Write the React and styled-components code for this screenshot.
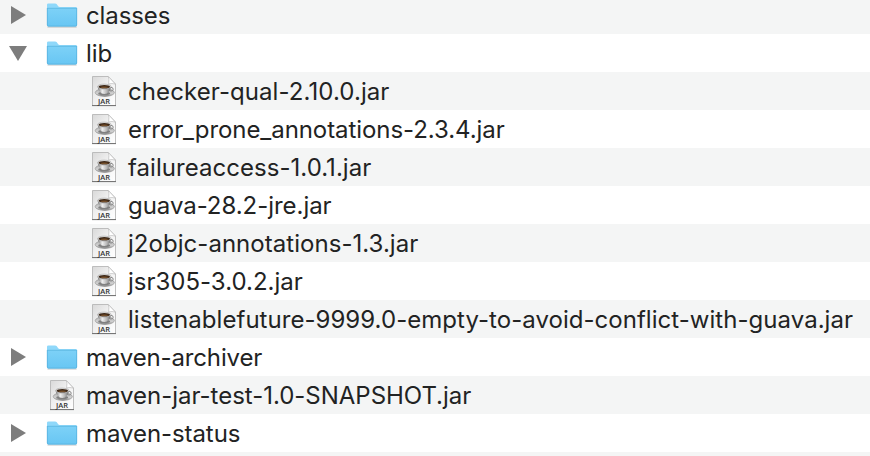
import React from "react";
import styled, { createGlobalStyle } from "styled-components";

const GlobalStyle = createGlobalStyle`
  body { margin: 0; background: #fff; overflow: hidden; }
`;

const FileList = styled.div`
  display: flex;
  flex-direction: column;
  width: 870px;
  height: 456px;
  margin: 0;
  overflow: hidden;
  background: #fff;
`;

const Row = styled.div`
  display: flex;
  flex: none;
  align-items: flex-end;
  width: 100%;
  height: ${(p) => p.$height || 38}px;
  background: ${(p) => (p.$shaded ? "#f4f5f5" : "#ffffff")};
`;

const Disclosure = styled.div`
  flex: none;
  width: ${(p) => (p.$nested ? 86 : 44)}px;
  height: 38px;
`;

const IconSlot = styled.div`
  flex: none;
  width: 42px;
  height: 38px;
`;

const Label = styled.span`
  height: 38px;
  font-family: Inter, "Liberation Sans", sans-serif;
  font-size: 24px;
  line-height: 40px;
  letter-spacing: ${(p) => p.$tracking || 0}px;
  font-feature-settings: "calt" 0;
  white-space: nowrap;
  color: #222323;
`;

const Drawing = styled.svg`
  display: block;
`;

function Arrow({ open }) {
  return (
    <Drawing width="44" height="38" viewBox="0 0 44 38">
      <path d={open ? "M9 12H27L18 27Z" : "M11 10V28L26 19Z"} fill="#7d7d7d" />
    </Drawing>
  );
}

function FolderIcon() {
  return (
    <Drawing width="42" height="38" viewBox="0 0 42 38">
      <path d="M3.5 31H32.6" stroke="#000" strokeOpacity=".2" strokeWidth="1.2" />
      <path d="M3 29V8.8Q3 7.4 4.4 7.4H11.2Q12 7.4 12.6 8.1L14.2 10.2Q14.7 11 15.8 11H31.6Q33 11 33 12.4V29Z" fill="#8fd8fa" />
      <path d="M3 12.2H33V29Q33 30.4 31.6 30.4H4.4Q3 30.4 3 29Z" fill="url(#folderFront)" />
      <path d="M3.4 12.3H32.6" stroke="#58b5df" strokeWidth=".8" />
      <path d="M3.3 12V29Q3.3 30.1 4.4 30.1H31.6Q32.7 30.1 32.7 29V12" fill="none" stroke="#51addb" strokeWidth=".7" />
    </Drawing>
  );
}

function JarIcon() {
  return (
    <Drawing width="42" height="38" viewBox="0 0 42 38">
      <path d="M6.5 4.5H22.2L29.5 12V33.5H6.5Z" fill="url(#jarPaper)" stroke="#b0b0b0" strokeWidth=".8" />
      <path d="M6 33.6H30" stroke="#6f6f6f" strokeWidth="1" />
      <path d="M22.4 4.6Q23.4 7.2 22.6 11.9Q26 11 29.3 12.1Z" fill="#fff" stroke="#b4b4b4" strokeWidth=".6" />
      <ellipse cx="18.8" cy="20.6" rx="9.6" ry="3.9" fill="url(#saucer)" stroke="#858585" strokeWidth=".5" />
      <ellipse cx="18.2" cy="21.4" rx="6" ry="1.8" fill="#808080" />
      <ellipse cx="25" cy="17.2" rx="2.2" ry="1.8" fill="none" stroke="#888" strokeWidth="1" />
      <path d="M11.6 14.6H25Q24.5 19 20.9 21.6Q18.3 22.4 15.7 21.6Q12.1 19 11.6 14.6Z" fill="url(#cup)" />
      <ellipse cx="18.3" cy="14.6" rx="6.8" ry="2.5" fill="#e4e4e4" stroke="#999" strokeWidth=".5" />
      <ellipse cx="18.3" cy="14.7" rx="5.7" ry="1.8" fill="#3c2818" />
      <ellipse cx="18.3" cy="15.3" rx="3.8" ry=".8" fill="#76502b" />
      <text x="18" y="32" textAnchor="middle" textLength="12" lengthAdjust="spacingAndGlyphs" fontFamily="Open Sans, sans-serif" fontSize="7.6" fontWeight="600" fill="#333">JAR</text>
    </Drawing>
  );
}

function IconDefs() {
  return (
    <Drawing width="0" height="0">
      <defs>
        <linearGradient id="folderFront" x2="0" y2="1">
          <stop stopColor="#7dd1f7" />
          <stop offset="1" stopColor="#68c6f3" />
        </linearGradient>
        <linearGradient id="jarPaper" x2="1" y2="1">
          <stop stopColor="#d9d9d9" />
          <stop offset=".45" stopColor="#f0f0f0" />
          <stop offset="1" stopColor="#ffffff" />
        </linearGradient>
        <linearGradient id="saucer" x2="0" y2="1">
          <stop stopColor="#b8b8b8" />
          <stop offset=".65" stopColor="#d0d0d0" />
          <stop offset="1" stopColor="#777" />
        </linearGradient>
        <linearGradient id="cup">
          <stop stopColor="#777" />
          <stop offset=".35" stopColor="#eee" />
          <stop offset=".7" stopColor="#b4b4b4" />
          <stop offset="1" stopColor="#666" />
        </linearGradient>
      </defs>
    </Drawing>
  );
}

const entries = [
  { name: "classes", folder: true, tracking: -0.1 },
  { name: "lib", folder: true, open: true, tracking: -0.1 },
  { name: "checker-qual-2.10.0.jar", nested: true, tracking: 0.08 },
  { name: "error_prone_annotations-2.3.4.jar", nested: true, tracking: -0.07 },
  { name: "failureaccess-1.0.1.jar", nested: true, tracking: 0.04 },
  { name: "guava-28.2-jre.jar", nested: true, tracking: -0.04 },
  { name: "j2objc-annotations-1.3.jar", nested: true, tracking: 0.04 },
  { name: "jsr305-3.0.2.jar", nested: true },
  { name: "listenablefuture-9999.0-empty-to-avoid-conflict-with-guava.jar", nested: true, tracking: 0.04 },
  { name: "maven-archiver", folder: true, tracking: -0.15 },
  { name: "maven-jar-test-1.0-SNAPSHOT.jar", tracking: -0.02 },
  { name: "maven-status", folder: true, tracking: -0.07 },
];

export default function App() {
  return (
    <>
      <GlobalStyle />
      <IconDefs />
      <FileList>
        {entries.map((entry, index) => (
          <Row key={entry.name} $shaded={index % 2 === 0} $height={index === 0 ? 34 : 38}>
            <Disclosure $nested={entry.nested}>{entry.folder && <Arrow open={entry.open} />}</Disclosure>
            <IconSlot>{entry.folder ? <FolderIcon /> : <JarIcon />}</IconSlot>
            <Label $tracking={entry.tracking}>{entry.name}</Label>
          </Row>
        ))}
        <Row $shaded $height={4} />
      </FileList>
    </>
  );
}
